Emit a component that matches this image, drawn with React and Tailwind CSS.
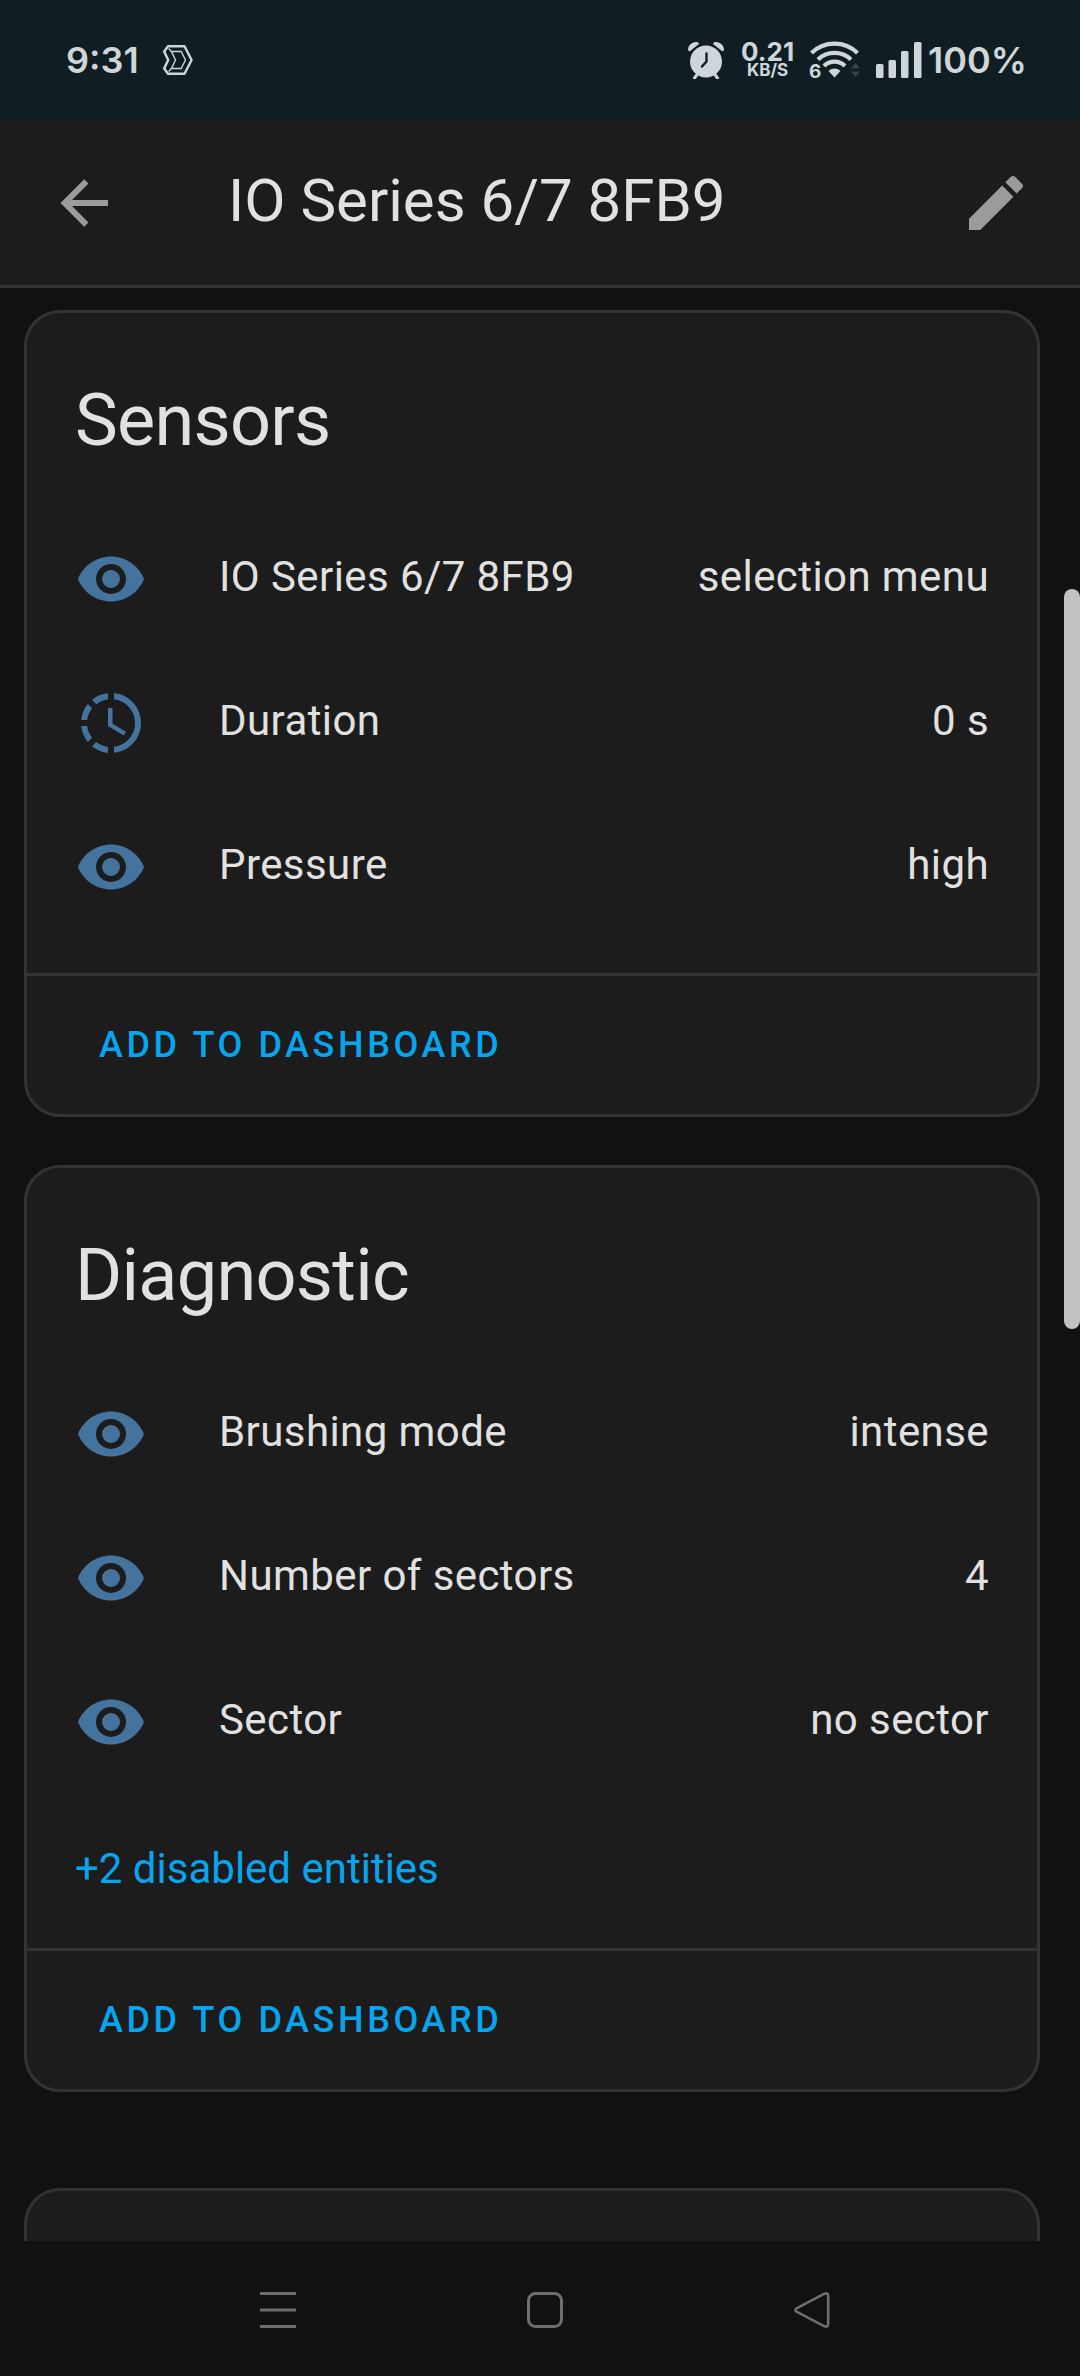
import React from 'react';

const ICONS = {
  back: 'M20,11V13H8L13.5,18.5L12.08,19.92L4.16,12L12.08,4.08L13.5,5.5L8,11H20Z',
  pencil:
    'M20.71,7.04C21.1,6.65 21.1,6 20.71,5.63L18.37,3.29C18,2.9 17.35,2.9 16.96,3.29L15.12,5.12L18.87,8.87M3,17.25V21H6.75L17.81,9.93L14.06,6.18L3,17.25Z',
  eye: 'M12,9A3,3 0 0,0 9,12A3,3 0 0,0 12,15A3,3 0 0,0 15,12A3,3 0 0,0 12,9M12,17A5,5 0 0,1 7,12A5,5 0 0,1 12,7A5,5 0 0,1 17,12A5,5 0 0,1 12,17M12,4.5C7,4.5 2.73,7.61 1,12C2.73,16.39 7,19.5 12,19.5C17,19.5 21.27,16.39 23,12C21.27,7.61 17,4.5 12,4.5Z',
  progressClock:
    'M13,2.03V2.05L13,4.05C17.39,4.59 20.5,8.58 19.96,12.97C19.5,16.61 16.64,19.5 13,19.93V21.93C18.5,21.38 22.5,16.5 21.95,11C21.5,6.25 17.73,2.5 13,2.03M11,2.06C9.05,2.25 7.19,3 5.67,4.26L7.1,5.74C8.22,4.84 9.57,4.26 11,4.06V2.06M4.26,5.67C3,7.19 2.25,9.04 2.05,11H4.05C4.24,9.58 4.8,8.23 5.69,7.1L4.26,5.67M2.06,13C2.26,14.96 3.03,16.81 4.27,18.33L5.69,16.9C4.81,15.77 4.24,14.42 4.06,13H2.06M7.1,18.37L5.67,19.74C7.18,21 9.04,21.79 11,22V20C9.58,19.82 8.23,19.25 7.1,18.37M12.5,7V12.25L17,14.92L16.25,16.15L11,13V7H12.5Z',
};

const sensors = [
  { icon: 'eye', name: 'IO Series 6/7 8FB9', state: 'selection menu' },
  { icon: 'progressClock', name: 'Duration', state: '0 s' },
  { icon: 'eye', name: 'Pressure', state: 'high' },
];

const diagnostics = [
  { icon: 'eye', name: 'Brushing mode', state: 'intense' },
  { icon: 'eye', name: 'Number of sectors', state: '4' },
  { icon: 'eye', name: 'Sector', state: 'no sector' },
];

function Icon({ name, className = '' }) {
  return (
    <svg viewBox="0 0 24 24" className={`size-[72px] shrink-0 ${className}`} fill="currentColor" aria-hidden="true">
      <path d={ICONS[name]} />
    </svg>
  );
}

function StatusBar() {
  return (
    <div className="flex h-[120px] items-center justify-between bg-[#101e23] pr-[53px] pl-[66px] font-[Inter,sans-serif] text-[36px] leading-none font-semibold text-[#cfd6d9]">
      <div className="flex items-center gap-6">
        <span>9:31</span>
        <svg viewBox="0 0 30 30" className="size-[30px]" fill="none" stroke="currentColor" strokeLinejoin="round" aria-hidden="true">
          <path d="M5 1.2H21.5L28.6 15L21.5 28.8H5L1.2 23.5L5.2 15L1.2 6.5Z" strokeWidth="2.4" />
          <path d="M8.5 6.5H18.2L22.5 15L18.2 23.5H8.5L12.5 15Z" strokeWidth="1.4" />
          <path d="M5.5 3.5L8.5 6.5M5.5 26.5L8.5 23.5" strokeWidth="1.4" />
        </svg>
      </div>

      <div className="flex items-center gap-4">
        <svg viewBox="0 0 38 38" className="size-[38px]" fill="currentColor" aria-hidden="true">
          <path d="M1 9A8 8 0 0 1 11 1.2L12 3L2.5 10.5Z" />
          <path d="M37 9A8 8 0 0 0 27 1.2L26 3L35.5 10.5Z" />
          <circle cx="19" cy="20.5" r="16" />
          <path d="M10.5 33L7.5 37M27.5 33L30.5 37" stroke="currentColor" strokeWidth="3" strokeLinecap="round" />
          <path d="M19.5 12.5V20.5L15 25.5" fill="none" stroke="#101e23" strokeWidth="2.4" strokeLinecap="round" strokeLinejoin="round" />
        </svg>
        <div className="flex flex-col items-center font-bold">
          <span className="text-[26px] leading-[20px]">0.21</span>
          <span className="text-[17px] leading-[17px]">KB/S</span>
        </div>
        <svg viewBox="0 0 50 38" className="h-[38px] w-[50px] overflow-visible" fill="none" stroke="currentColor" strokeWidth="4.2" aria-hidden="true">
          <path d="M1.5 12A33 33 0 0 1 47.5 12" />
          <path d="M8 18.5A24 24 0 0 1 41 18.5" />
          <path d="M14 25A15 15 0 0 1 35 25" />
          <path d="M24.500 36.500L18.500 30A8.500 8.500 0 0 1 30.500 30Z" fill="currentColor" stroke="none" />
          <path d="M45.5 22L50 27.5H41ZM45.5 36L50 30.5H41Z" fill="#36444a" stroke="none" />
          <text x="-1" y="37" fontSize="19" fontWeight="700" fill="currentColor" stroke="none">6</text>
        </svg>
        <div className="flex items-center gap-1.5">
          <svg viewBox="0 0 46 36" className="h-[36px] w-[46px]" fill="currentColor" aria-hidden="true">
            <rect x="0" y="22" width="7.5" height="14" rx="1.5" />
            <rect x="12.5" y="18" width="7.5" height="18" rx="1.5" />
            <rect x="25" y="9" width="7.5" height="27" rx="1.5" />
            <rect x="38" y="0" width="7.5" height="36" rx="1.5" />
          </svg>
          <span>100%</span>
        </div>
      </div>
    </div>
  );
}

function Header() {
  return (
    <header className="flex h-[168px] items-center border-b-3 border-[#333333] bg-[#1c1c1c] px-12">
      <button type="button" aria-label="Back" className="text-[#9b9b9b]">
        <Icon name="back" />
      </button>
      <h1 className="ml-[108px] flex-1 pb-1 text-[60px] leading-[72px]">IO Series 6/7 8FB9</h1>
      <button type="button" aria-label="Edit" className="text-[#9b9b9b]">
        <Icon name="pencil" />
      </button>
    </header>
  );
}

function EntityRow({ icon, name, state }) {
  return (
    <li className="flex h-36 items-center">
      <Icon name={icon} className="text-[#44739e]" />
      <span className="ml-[72px] flex-1 pb-1">{name}</span>
      <span className="pb-1">{state}</span>
    </li>
  );
}

function EntityCard({ title, entities, disabledCount }) {
  return (
    <section className="rounded-[36px] border-3 border-[#333333] bg-[#1c1c1c]">
      <h2 className="px-12 pt-9 text-[72px] leading-[144px] tracking-[-0.01em]">{title}</h2>
      <ul className="px-12 pt-3.5 text-[42px] leading-[60px] tracking-[0.01em]">
        {entities.map((entity) => (
          <EntityRow key={entity.name} {...entity} />
        ))}
      </ul>
      {disabledCount ? (
        <button type="button" className="flex h-[154px] items-center px-12 pb-1 text-[42px] leading-[60px] text-[#08a4ee]">
          +{disabledCount} disabled entities
        </button>
      ) : (
        <div className="h-[34px]" />
      )}
      <div className="flex h-[141px] items-center border-t-3 border-[#333333] px-6">
        <button type="button" className="px-12 text-[36px] leading-[108px] font-medium tracking-widest text-[#08a4ee] uppercase">
          Add to dashboard
        </button>
      </div>
    </section>
  );
}

function NavigationBar() {
  return (
    <nav className="grid h-[135px] grid-cols-3 items-center justify-items-center bg-[#111111] pt-0.5 pr-[134px] pl-36 text-[#6e6e6e]">
      <button type="button" aria-label="Recent apps">
        <svg viewBox="0 0 36 36" className="size-9" stroke="currentColor" strokeWidth="3">
          <path d="M0 1.5H36M0 18H36M0 34.5H36" />
        </svg>
      </button>
      <button type="button" aria-label="Home">
        <svg viewBox="0 0 36 36" className="size-9" fill="none" stroke="currentColor" strokeWidth="3">
          <rect x="1.5" y="1.5" width="33" height="33" rx="7" />
        </svg>
      </button>
      <button type="button" aria-label="Back">
        <svg viewBox="0 0 36 36" className="size-9" fill="none" stroke="currentColor" strokeWidth="2.6">
          <path d="M2.5 16.3L30.5 1.7Q34.2 0.5 34.2 4V32Q34.2 35.5 30.5 34.3L2.5 19.7Q0.5 18 2.5 16.3Z" strokeLinejoin="round" />
        </svg>
      </button>
    </nav>
  );
}

function App() {
  return (
    <div className="flex min-h-screen flex-col bg-[#111111] font-[Roboto,sans-serif] text-[#e1e1e1]">
      <StatusBar />
      <Header />
      <div className="flex flex-1">
        <main className="flex flex-1 flex-col px-6 pt-[22px]">
          <EntityCard title="Sensors" entities={sensors} />
          <div className="h-12" />
          <EntityCard title="Diagnostic" entities={diagnostics} disabledCount={2} />
          {/* top edge of the next card, running under the navigation bar */}
          <section className="mt-24 min-h-12 flex-1 rounded-t-[36px] border-3 border-b-0 border-[#333333] bg-[#1c1c1c]" />
        </main>
        {/* scrollbar gutter */}
        <div className="w-4 pt-[301px]">
          <div className="h-[740px] rounded-full bg-[#c1c1c1]" />
        </div>
      </div>
      <NavigationBar />
    </div>
  );
}

export default App;
